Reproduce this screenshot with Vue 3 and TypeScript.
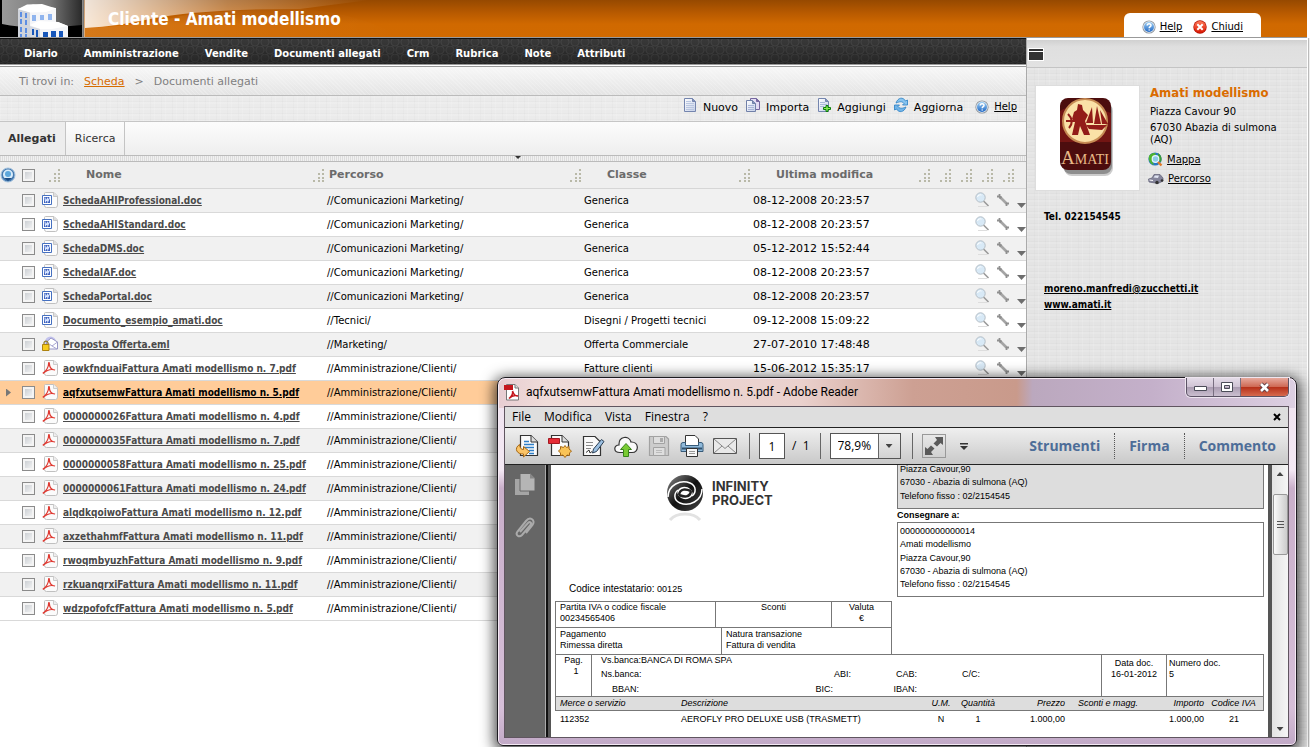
<script setup lang="ts">
import { ref } from 'vue'

type Kind = 'doc' | 'eml' | 'pdf'
interface FileRow {
  name: string
  kind: Kind
  path: string
  type: string
  date: string
}

const sections = ['Diario', 'Amministrazione', 'Vendite', 'Documenti allegati', 'Crm', 'Rubrica', 'Note', 'Attributi']

const actions = [
  { label: 'Nuovo', icon: 'i-new' },
  { label: 'Importa', icon: 'i-import' },
  { label: 'Aggiungi', icon: 'i-add' },
  { label: 'Aggiorna', icon: 'i-refresh' },
]

const row = (name: string, kind: Kind, path: string, type = '', date = ''): FileRow => ({ name, kind, path, type, date })
const marketing = '//Comunicazioni Marketing/'
const clients = '//Amministrazione/Clienti/'

const files: FileRow[] = [
  row('SchedaAHIProfessional.doc', 'doc', marketing, 'Generica', '08-12-2008 20:23:57'),
  row('SchedaAHIStandard.doc', 'doc', marketing, 'Generica', '08-12-2008 20:23:57'),
  row('SchedaDMS.doc', 'doc', marketing, 'Generica', '05-12-2012 15:52:44'),
  row('SchedaIAF.doc', 'doc', marketing, 'Generica', '08-12-2008 20:23:57'),
  row('SchedaPortal.doc', 'doc', marketing, 'Generica', '08-12-2008 20:23:57'),
  row('Documento_esempio_amati.doc', 'doc', '//Tecnici/', 'Disegni / Progetti tecnici', '09-12-2008 15:09:22'),
  row('Proposta Offerta.eml', 'eml', '//Marketing/', 'Offerta Commerciale', '27-07-2010 17:48:48'),
  row('aowkfnduaiFattura Amati modellismo n. 7.pdf', 'pdf', clients, 'Fatture clienti', '15-06-2012 15:35:17'),
  row('aqfxutsemwFattura Amati modellismo n. 5.pdf', 'pdf', clients),
  row('0000000026Fattura Amati modellismo n. 4.pdf', 'pdf', clients),
  row('0000000035Fattura Amati modellismo n. 7.pdf', 'pdf', clients),
  row('0000000058Fattura Amati modellismo n. 25.pdf', 'pdf', clients),
  row('0000000061Fattura Amati modellismo n. 24.pdf', 'pdf', clients),
  row('alqdkqoiwoFattura Amati modellismo n. 12.pdf', 'pdf', clients),
  row('axzethahmfFattura Amati modellismo n. 11.pdf', 'pdf', clients),
  row('rwoqmbyuzhFattura Amati modellismo n. 9.pdf', 'pdf', clients),
  row('rzkuanqrxiFattura Amati modellismo n. 11.pdf', 'pdf', clients),
  row('wdzpofofcfFattura Amati modellismo n. 5.pdf', 'pdf', clients),
]
const selected = ref(8)

const tools = [
  { label: 'Apri', icon: 't-open' },
  { label: 'Crea PDF', icon: 't-create' },
  { label: 'Firma documento', icon: 't-sign' },
  { label: 'Carica', icon: 't-cloud' },
  { label: 'Salva', icon: 't-save' },
  { label: 'Stampa', icon: 't-print' },
  { label: 'Invia', icon: 't-mail' },
]
const menus = ['File', 'Modifica', 'Vista', 'Finestra', '?']
const page = ref('1')
const zoom = ref('78,9%')
</script>

<template>
  <div class="app">
    <svg class="defs" width="0" height="0" aria-hidden="true">
      <defs>
        <linearGradient id="g-blue" x1="0" y1="0" x2="0" y2="1"><stop offset="0" stop-color="#9fd0f4" /><stop offset="1" stop-color="#1f67c4" /></linearGradient>
        <linearGradient id="g-red" x1="0" y1="0" x2="0" y2="1"><stop offset="0" stop-color="#ff7a5a" /><stop offset="1" stop-color="#d81500" /></linearGradient>
        <linearGradient id="g-page" x1="0" y1="0" x2="1" y2="1"><stop offset="0" stop-color="#fff" /><stop offset="1" stop-color="#c4cfe8" /></linearGradient>
        <linearGradient id="g-glass" x1="0" y1="0" x2="1" y2="0"><stop offset="0" stop-color="#999" /><stop offset=".6" stop-color="#777" /><stop offset="1" stop-color="#2a2a2a" /></linearGradient>
        <linearGradient id="g-fade" x1="0" y1="0" x2="1" y2="0"><stop offset="0" stop-color="#fff" stop-opacity=".85" /><stop offset=".5" stop-color="#fff" stop-opacity=".3" /><stop offset="1" stop-color="#fff" stop-opacity="0" /></linearGradient>
        <linearGradient id="g-ring" x1="0" y1="0" x2="1" y2="1"><stop offset="0" stop-color="#8a8a8a" /><stop offset=".5" stop-color="#111" /><stop offset="1" stop-color="#444" /></linearGradient>
      </defs>
      <symbol id="i-help" viewBox="0 0 14 14">
        <circle cx="7" cy="7" r="6.6" fill="#8e959d" /><circle cx="7" cy="7" r="5.8" fill="#e4ecf4" /><circle cx="7" cy="7" r="5" fill="url(#g-blue)" />
        <path d="M5.2 5.6C5.2 3.2 9 3.3 9 5.4 9 6.7 7.2 6.7 7.2 8.2M7.2 9.4V10.6" fill="none" stroke="#fff" stroke-width="1.5" />
      </symbol>
      <symbol id="i-close" viewBox="0 0 14 14">
        <circle cx="7" cy="7" r="6.7" fill="#b30f00" /><circle cx="7" cy="7" r="6" fill="url(#g-red)" />
        <path d="M4.3 4.3L9.7 9.7M9.7 4.3L4.3 9.7" stroke="#fff" stroke-width="2" />
      </symbol>
      <symbol id="i-new" viewBox="0 0 14 16">
        <path d="M1.5 1.5H9.5L12.5 4.5V14.5H1.5Z" fill="url(#g-page)" stroke="#7485ae" /><path d="M9.5 1.5V4.5H12.5" fill="#8494bb" stroke="#7485ae" />
        <path d="M3 4.5H8M3 6.5H11M3 8.5H11M3 10.5H11M3 12.5H11" stroke="#b9c6e0" />
      </symbol>
      <symbol id="i-import" viewBox="0 0 14 16">
        <path d="M4.5 1.5H10.5L13.5 4.5V12.5H4.5Z" fill="#e3dcf3" stroke="#75679f" /><path d="M10.5 1.5V4.5H13.5" fill="#75679f" stroke="#75679f" />
        <path d="M.5 3.5H6.5L9.5 6.5V14.5H.5Z" fill="url(#g-page)" stroke="#7080a8" /><path d="M6.5 3.5V6.5H9.5" fill="#8494bb" stroke="#7080a8" />
        <path d="M2 8.5H8M2 10.5H8M2 12.5H8" stroke="#a9b5d8" />
      </symbol>
      <symbol id="i-add" viewBox="0 0 14 16">
        <path d="M1.5 1.5H8.5L11.5 4.5V14.5H1.5Z" fill="url(#g-page)" stroke="#7485ae" /><path d="M8.5 1.5V4.5H11.5" fill="#8494bb" stroke="#7485ae" />
        <path d="M3 5.5H8M3 7.5H10M3 9.5H7" stroke="#a9b8d8" />
        <path d="M9 8.5H11V10.5H13.5V12.5H11V14.5H9V12.5H6.5V10.5H9Z" fill="#8aea54" stroke="#087d08" />
      </symbol>
      <symbol id="i-refresh" viewBox="0 0 14 16">
        <path d="M2 6C4 .5 9-.5 11.5 4L13.5 3V8H8.500L10 6.5C8 4 6 4.5 2 6Z" fill="#88c4ef" stroke="#287fc4" stroke-width=".8" />
        <path d="M12 10C10 15.5 5 16 2.5 12L.5 13V8H5.500L4 9.5C6 12 8 11.5 12 10Z" fill="#70b4e8" stroke="#287fc4" stroke-width=".8" />
      </symbol>
      <symbol id="i-round" viewBox="0 0 16 16">
        <circle cx="8" cy="8" r="7" fill="#477bb0" stroke="#a5c3df" /><circle cx="8" cy="7.5" r="5" fill="#d9ecfa" /><circle cx="8" cy="7" r="3" fill="#5da7db" /><path d="M4 11L8 14L12 11" fill="#1c4c83" />
      </symbol>
      <symbol id="i-grip" viewBox="0 0 11 13">
        <path d="M9 0h2v2H9zM9 4h2v2H9zM9 8h2v2H9zM9 11h2v2H9zM5 4h2v2H5zM5 8h2v2H5zM5 11h2v2H5zM0 11h2v2H0z" fill="#b9b9a8" />
      </symbol>
      <symbol id="f-doc" viewBox="0 0 16 16">
        <path d="M3.5.5H12L15.5 4V13Q15.5 15.5 13.5 15.5H4.5Q2.5 15.5 2.5 13.5V1.5Q2.5.5 3.5.5Z" fill="#fbfbfb" stroke="#c0c0c0" /><path d="M11.500.5V4.5H15.5" fill="#ddd" stroke="#c8c8c8" />
        <path d="M.5 3.5H9.5V12.500H.5Z" fill="#fff" stroke="#4570c0" /><path d="M2 5H8V11H2Z" fill="#3e61bd" /><path d="M3 5.500L3.500 9.500L5.500 6.500L5.800 9.500L8 5" fill="none" stroke="#d8e6ff" stroke-width="1.1" />
      </symbol>
      <symbol id="f-pdf" viewBox="0 0 16 16">
        <path d="M3.5.5H12L15.5 4V13Q15.5 15.5 13.5 15.5H4.5Q2.5 15.5 2.5 13.5V1.5Q2.5.5 3.5.5Z" fill="#fbfbfb" stroke="#c0c0c0" /><path d="M11.500.5V4.5H15.5" fill="#eee" stroke="#ccc" />
        <path d="M.7 13.2C4 11.500 6.800 7 6.600 3.500C6.300 2.300 7.600 2.300 7.400 3.800C7.500 7 9.500 9.800 13 10C10 9 5 10 1 13.500" fill="none" stroke="#df3a32" stroke-width="1.2" />
      </symbol>
      <symbol id="f-eml" viewBox="0 0 16 16">
        <circle cx="8.5" cy="6" r="5.5" fill="#c3c3ee" /><path d="M4.5 6L9 2L15.5 6V13H4.5Z" fill="#fff" stroke="#9795c5" /><path d="M4.5 6L10 10L15.5 6M10 10L15 13" fill="none" stroke="#aaa8d2" />
        <path d="M2 9V7C2 4.5 6 4.5 6 7V9" fill="none" stroke="#8f7b22" stroke-width="1.2" /><path d="M.5 8.5H7V14.500H.5Z" fill="#f6cc1c" stroke="#ad8210" />
      </symbol>
      <symbol id="a-find" viewBox="0 0 15 16">
        <path d="M3 14.5H12" stroke="#ddd" /><path d="M8.5 9L13.5 14" stroke="#999" stroke-width="1.6" /><circle cx="5.5" cy="5.5" r="4.7" fill="#d8e9f6" stroke="#b4bec6" /><path d="M2.5 5C3 3 5 2.500 6.500 3" fill="none" stroke="#fff" />
      </symbol>
      <symbol id="a-wrench" viewBox="0 0 14 14">
        <path d="M4 4L10.500 10.500" stroke="#a5a5a5" stroke-width="2.600" /><path d="M3.500 1V3.500H1M3.500 5.500L5.500 3.500M10.500 13V10.500H13" fill="none" stroke="#8f8f8f" stroke-width="1.800" />
      </symbol>
      <symbol id="s-globe" viewBox="0 0 15 15">
        <circle cx="7" cy="7" r="6.6" fill="#2677c4" /><path d="M1 4C3 1 7 0 8 2L5 5L4 9L6 13C2 12 0 8 1 4Z" fill="#4eb42e" /><path d="M10 1C14 4 14 7 13 10L10 8Z" fill="#3b9d36" />
        <circle cx="7.5" cy="7" r="3.3" fill="#8ccbe8" stroke="#e8f6ff" stroke-width="1.2" /><path d="M10 10L13.5 13.5" stroke="#e07a28" stroke-width="2.4" />
      </symbol>
      <symbol id="s-car" viewBox="0 0 16 12">
        <path d="M.5 6L4 5L6 1.5H12L15 5V8L10 10.5L1 9Z" fill="#85859b" stroke="#5e5e75" stroke-width=".7" /><path d="M5.5 4.5L7 2.5H11L10 5Z" fill="#dfe4f2" /><path d="M1.5 7L5 7.500" stroke="#fff" /><circle cx="9" cy="9.5" r="1.7" fill="#333" /><circle cx="14" cy="7.5" r="1.3" fill="#333" />
      </symbol>
      <symbol id="p-adobe" viewBox="0 0 16 17">
        <path d="M2.5.5H11L14.500 4V16H2.5Z" fill="#fff" stroke="#777" /><path d="M11 .5V4H14.500" fill="#ddd" stroke="#777" /><path d="M0 1H9V6H0Z" fill="#c4161c" />
        <path d="M5 14.500C8 12 9 9 8.500 7C10 11 11 12 14 12C11 11 8 11.500 5 14.500" fill="none" stroke="#c4161c" stroke-width="1.500" />
      </symbol>
      <symbol id="t-open" viewBox="0 0 24 24">
        <path d="M5.5 1.5H16L22.5 8V21.5H5.5Z" fill="#fafafa" stroke="#333" stroke-width="1.2" /><path d="M16 1.500V8H22.5" fill="#ddd" stroke="#333" />
        <path d="M9 7.5H14M9 10.5H19M9 13.5H19M14 16.5H19M14 19.5H19" stroke="#2f7fc8" stroke-width="1.5" />
        <path d="M4.500 10.500C5 14 6 15.500 8.500 15.500V12.500L14.500 17.500L8.500 23V20C2 20.500-1.500 14.500 4.500 10.500Z" fill="#fac468" stroke="#a66814" />
      </symbol>
      <symbol id="t-create" viewBox="0 0 24 24">
        <path d="M3.5 1.5H14L20.5 8V21.5H3.5Z" fill="#fafafa" stroke="#333" stroke-width="1.2" /><path d="M14 1.500V8H20.500" fill="#ddd" stroke="#333" /><path d="M.5 4.5H11.500V9.5H.5Z" fill="#e52b36" stroke="#a31820" />
        <path d="M17 11.500L18.500 13.500L21 12.500V15L23.500 17L21.500 19V21.500L19 21L17 23.500L15 21L12.500 21.500V19L10.500 17L12.500 15V12.500L15.500 13.500Z" fill="#f9c356" stroke="#a66814" />
      </symbol>
      <symbol id="t-sign" viewBox="0 0 24 24">
        <path d="M2.5 2.5H14L19.5 8V21.5H2.5Z" fill="#fafafa" stroke="#333" stroke-width="1.2" /><path d="M5 8.5H12M5 11.5H12M5 14.5H10" stroke="#888" /><path d="M5 18.500L8 16L9 19L11 17.500" fill="none" stroke="#333" />
        <path d="M11.500 19L12.500 15L20.5 5.500L23 7.500L15.500 17.500Z" fill="#9cc0e2" stroke="#2b3f54" />
      </symbol>
      <symbol id="t-cloud" viewBox="0 0 24 24">
        <path d="M6 18.5C-1 18.5-.5 11 5 11C4.500 2 15 1 17 8C25 7.500 25.500 18.500 18 18.500Z" fill="#fafafa" stroke="#333" stroke-width="1.2" /><path d="M12 9.5L17.500 15.5H14.5V22.5H9.5V15.5H6.500Z" fill="#7acb34" stroke="#38851a" />
      </symbol>
      <symbol id="t-save" viewBox="0 0 24 24">
        <path d="M2.500 2.500H19L21.500 5V21.500H2.500Z" fill="#ccc" stroke="#a2a2a2" stroke-width="1.200" /><path d="M6.500 2.500H17.500V9.500H6.500ZM6.500 13.500H18V21.500H6.500Z" fill="#dedede" stroke="#a2a2a2" /><path d="M13 4H16V8H13Z" fill="#aaa" /><path d="M9 16.500H15M9 18.500H15" stroke="#bbb" />
      </symbol>
      <symbol id="t-print" viewBox="0 0 24 24">
        <path d="M5.500 1.500H15L18.500 5V12H5.500Z" fill="#fff" stroke="#333" /><path d="M3 8.500H5.500V11.500H18.500V8.500H21Q23 8.500 23 10.500V17.500H1V10.500Q1 8.500 3 8.500Z" fill="#8fb9da" stroke="#365a78" /><path d="M2 14.500H22" stroke="#315370" stroke-width="2" />
        <path d="M6.500 14.500H17.500V22.500H6.500Z" fill="#f7f7f7" stroke="#333" /><path d="M9 17.500H15M9 19.500H15" stroke="#999" />
      </symbol>
      <symbol id="t-mail" viewBox="0 0 24 24">
        <path d="M.5 4.500H23.500V19.500H.5Z" fill="#e9e9e9" stroke="#555" /><path d="M1 5L12 14.500L23 5M1 19L9 12M23 19L15 12" fill="none" stroke="#888" />
      </symbol>
    </svg>

    <header class="banner">
      <svg class="art" width="500" height="37" viewBox="0 0 500 37" aria-hidden="true">
        <path d="M85 0H370Q330 5 300 9Q200 9 150 19Q120 26 85 28Z" fill="url(#g-fade)" /><path d="M85 28Q150 25 180 16Q220 10 300 9Q360 13 400 37H85Z" fill="url(#g-fade)" opacity=".12" />
        <path d="M0 0H84V37H0Z" fill="#000" /><path d="M2 0H82V25Q30 30 2 24Z" fill="url(#g-glass)" /><path d="M82.5 0V37" stroke="#888" /><path d="M84 0V37" stroke="#eee" />
        <path d="M18 9L33 4.500L56 8V25H30L28 37H18Z" fill="#f4f5f8" /><path d="M18 9L30 12V37H18Z" fill="#d0d4dc" /><path d="M18 9L27 4.500L42 4L56 8.500L46 12L30 12.500Z" fill="#fff" /><path d="M30 25L38 21L58 22L68 26V37H30Z" fill="#f4f5f8" /><path d="M30 25L38 21L58 22L68 26L52 29H40Z" fill="#fff" /><path d="M30 26L40 29V37H30Z" fill="#d5d9e1" />
        <path d="M20 12h2v5h-2zM25 13h2v5h-2zM20 19h2v5h-2zM25 20h2v5h-2zM20 27h2v5h-2zM25 28h2v5h-2zM20 34h2v3h-2zM25 34h2v3h-2z" fill="#5d8ee2" /><path d="M32 15h4v6h-4zM40 15h4v5h-4zM48 14h4v6h-4z" fill="#8fb4ee" /><path d="M32 29h2v6h-2zM36 30h2v7h-2zM43 32h5v5h-5zM51 31h5v6h-5zM59 31h4v6h-4z" fill="#1857ba" />
      </svg>
      <h1>Cliente - Amati modellismo</h1>
      <div class="corner">
        <a href="#"><svg width="14" height="14"><use href="#i-help" /></svg><u>Help</u></a>
        <a href="#"><svg width="14" height="14"><use href="#i-close" /></svg><u>Chiudi</u></a>
      </div>
    </header>

    <div class="body">
      <main>
        <nav class="sections"><a v-for="s in sections" :key="s" href="#">{{ s }}</a></nav>
        <div class="crumbs"><span>Ti trovi in:</span><a href="#">Scheda</a><span>&gt;</span><span>Documenti allegati</span></div>
        <div class="actions">
          <button v-for="a in actions" :key="a.label" type="button"><svg width="14" height="16"><use :href="'#' + a.icon" /></svg>{{ a.label }}</button>
          <a href="#"><svg width="14" height="14"><use href="#i-help" /></svg><u>Help</u></a>
        </div>
        <div class="tabs"><button type="button" class="on">Allegati</button><button type="button">Ricerca</button></div>
        <div class="splitter"><i></i></div>
        <table class="files">
          <colgroup>
            <col class="c-mark"><col class="c-check"><col class="c-icon"><col class="c-name"><col class="c-path"><col class="c-type"><col class="c-date"><col class="c-act"><col class="c-act"><col class="c-act"><col class="c-act"><col>
          </colgroup>
          <thead>
            <tr>
              <th><svg width="16" height="16"><use href="#i-round" /></svg></th>
              <th><input type="checkbox" aria-label="Seleziona tutto"></th>
              <th><svg class="grip" width="11" height="13"><use href="#i-grip" /></svg></th>
              <th><div class="head">Nome<svg class="grip" width="11" height="13"><use href="#i-grip" /></svg></div></th>
              <th><div class="head near">Percorso<svg class="grip" width="11" height="13"><use href="#i-grip" /></svg></div></th>
              <th><div class="head">Classe<svg class="grip" width="11" height="13"><use href="#i-grip" /></svg></div></th>
              <th><div class="head">Ultima modifica<svg class="grip" width="11" height="13"><use href="#i-grip" /></svg></div></th>
              <th v-for="n in 4" :key="n"><svg class="grip" width="11" height="13"><use href="#i-grip" /></svg></th>
              <th></th>
            </tr>
          </thead>
          <tbody>
            <tr v-for="(f, i) in files" :key="f.name" :class="{ sel: i === selected }" @click="selected = i">
              <td><i v-if="i === selected" class="marker"></i></td>
              <td><input type="checkbox" :aria-label="f.name"></td>
              <td><svg class="kind" width="16" height="16"><use :href="'#f-' + f.kind" /></svg></td>
              <td><a href="#">{{ f.name }}</a></td>
              <td>{{ f.path }}</td>
              <td>{{ f.type }}</td>
              <td class="date">{{ f.date }}</td>
              <td></td>
              <td></td>
              <td><button type="button" aria-label="Anteprima"><svg width="15" height="16"><use href="#a-find" /></svg></button></td>
              <td><button type="button" aria-label="Strumenti"><svg width="14" height="14"><use href="#a-wrench" /></svg></button></td>
              <td class="more"><button type="button" aria-label="Altro"><i></i></button></td>
            </tr>
          </tbody>
        </table>
      </main>

      <aside>
        <div class="bar"><button type="button" aria-label="Riduci"></button></div>
        <div class="card">
          <div class="brand">
            <svg width="60" height="82" viewBox="0 0 60 82" role="img" aria-label="Amati">
              <rect x="6" y="6" width="49" height="73" rx="8" fill="#000" opacity=".2" /><rect x="5" y="5" width="49" height="72" rx="8" fill="#000" opacity=".3" /><rect x="2" y="1" width="51" height="72" rx="8" fill="#4c0d0e" /><path d="M2 14Q20 3 53 16V45H2Z" fill="#8c1b17" opacity=".6" />
              <circle cx="27" cy="24" r="22" fill="#fae1a7" stroke="#c68b54" stroke-width="2" />
              <path d="M20 7L24 8L25 13L30 18L27 24L32 38H26L22 29L20 38H14L17 25L14 22L16 15L19 13Z" fill="#921c18" /><path d="M10 17Q17 24 11 31M8 24H17" fill="none" stroke="#921c18" stroke-width="2" /><path d="M34 10L28 26H35ZM39 9L36 27H43ZM42 13L44 27H50ZM28 28L49 28L44 33L31 32Z" fill="#921c18" />
              <text x="3" y="67" class="brand-name" font-size="19">A<tspan font-size="14">MATI</tspan></text>
            </svg>
          </div>
          <div class="where">
            <h2>Amati modellismo</h2>
            <p>Piazza Cavour 90</p>
            <p>67030 Abazia di sulmona (AQ)</p>
            <a href="#"><svg width="15" height="15"><use href="#s-globe" /></svg><u>Mappa</u></a>
            <a href="#"><svg width="16" height="12"><use href="#s-car" /></svg><u>Percorso</u></a>
          </div>
        </div>
        <p class="tel">Tel. 022154545</p>
        <div class="links"><a href="#">moreno.manfredi@zucchetti.it</a><a href="#">www.amati.it</a></div>
      </aside>
      <div class="edge"></div>
    </div>

    <section class="reader" aria-label="Adobe Reader">
      <div class="title">
        <svg width="16" height="17"><use href="#p-adobe" /></svg>
        <span>aqfxutsemwFattura Amati modellismo n. 5.pdf - Adobe Reader</span>
        <div class="buttons">
          <button type="button" aria-label="Riduci a icona"><svg width="13" height="10" viewBox="0 0 13 10"><path d="M.5 4.500H12.500V8.500H.5Z" fill="#fff" stroke="#4b4c58" /></svg></button>
          <button type="button" aria-label="Ingrandisci"><svg width="12" height="10" viewBox="0 0 12 10"><path d="M.5.5H11.500V9.500H.5ZM3.500 3.500H8.500V6.500H3.500Z" fill="#fff" stroke="#4b4c58" fill-rule="evenodd" /></svg></button>
          <button type="button" class="shut" aria-label="Chiudi"><svg width="13" height="11" viewBox="0 0 13 11"><path d="M3 2L10 9M10 2L3 9" stroke="#5b3b42" stroke-width="4.500" /><path d="M3 2L10 9M10 2L3 9" stroke="#fff" stroke-width="2.600" /></svg></button>
        </div>
      </div>
      <div class="frame">
        <div class="menu">
          <button v-for="m in menus" :key="m" type="button">{{ m }}</button>
          <button type="button" class="x" aria-label="Chiudi documento"><svg width="8" height="8" viewBox="0 0 8 8"><path d="M1 1L7 7M7 1L1 7" stroke="#000" stroke-width="2" /></svg></button>
        </div>
        <div class="tools">
          <button v-for="t in tools" :key="t.icon" type="button" :aria-label="t.label"><svg width="24" height="24"><use :href="'#' + t.icon" /></svg></button>
          <i class="rule"></i>
          <input v-model="page" class="page-no" aria-label="Pagina"><span class="of">/&nbsp; 1</span>
          <i class="rule"></i>
          <span class="zoom"><select v-model="zoom" aria-label="Zoom"><option>78,9%</option></select><b></b></span>
          <i class="rule"></i>
          <button type="button" class="expand" aria-label="Modalità lettura"><svg width="18" height="18" viewBox="0 0 18 18"><path d="M10 0H18V8L15.500 6L12 9.500L8.500 6.500L12 3ZM0 18V10L2.500 12L6 8.500L9.500 11.500L6 15L8 18Z" fill="#5a5a5a" /></svg></button>
          <button type="button" class="drop" aria-label="Altri strumenti"><svg width="8" height="7" viewBox="0 0 8 7"><path d="M0 0H8V1.500H0ZM0 3H8L4 7Z" fill="#333" /></svg></button>
          <div class="panes"><button type="button">Strumenti</button><button type="button">Firma</button><button type="button">Commento</button></div>
        </div>
        <div class="view">
          <div class="side">
            <svg width="22" height="24" viewBox="0 0 22 24"><path d="M1 6H15V22H1Z" fill="#a5a5a5" /><path d="M6 .5H16L21 5.500V18H6Z" fill="#b5b5b5" stroke="#666" /><path d="M16 .5V5.500H21" fill="#888" /></svg>
            <svg width="22" height="24" viewBox="0 0 22 24"><path d="M6 16L14 7C16 5 18 7 16.500 9L8 19C5 22 1 19 3.500 15.500L12 5C16 0 22 4 18.500 9L12 17" fill="none" stroke="#aaa" stroke-width="2" /></svg>
          </div>
          <article class="sheet">
            <div class="upper">
              <div class="left">
                <div class="project">
                  <svg width="40" height="48" viewBox="0 0 40 48" aria-hidden="true">
                    <circle cx="20" cy="19" r="18" fill="url(#g-ring)" />
                    <path d="M3 23C3 11 16 5 25 9C32 12 31 19 27 22" fill="none" stroke="#fff" stroke-width="1.500" /><path d="M37 15C37 27 24 33 15 29C8 26 9 19 13 16" fill="none" stroke="#fff" stroke-width="1.500" />
                    <path d="M13 16C16 12 22 12 25 15C28 18 28 20 27 22C24 26 18 26 15 23C12 20 12 18 13 16Z" fill="#fff" /><path d="M14 21C15 14 21 15 26 17M26 17C25 24 19 23 14 21" fill="none" stroke="#222" stroke-width="2.500" />
                    <path d="M5 46Q10 40 20 40T35 46" fill="none" stroke="#e2e2e2" stroke-width="3" />
                  </svg>
                  <strong>INFINITY<br>PROJECT</strong>
                </div>
                <p class="code"><span>Codice intestatario:</span> 00125</p>
                <div class="grid three"><div>Partita IVA o codice fiscale<br>00234565406</div><div class="mid">Sconti</div><div class="mid">Valuta<br>€</div></div>
                <div class="grid two"><div>Pagamento<br>Rimessa diretta</div><div>Natura transazione<br>Fattura di vendita</div></div>
              </div>
              <div class="right">
                <div class="addr gray"><p>Piazza Cavour,90</p><p>67030 - Abazia di sulmona (AQ)</p><p>Telefono fisso : 02/2154545</p></div>
                <h3>Consegnare a:</h3>
                <div class="addr"><p>000000000000014</p><p>Amati modellismo</p><p>Piazza Cavour,90</p><p>67030 - Abazia di sulmona (AQ)</p><p>Telefono fisso : 02/2154545</p></div>
              </div>
            </div>
            <div class="bank">
              <div class="mid">Pag.<br>&nbsp; 1</div>
              <div class="lines">
                <p><span>Vs.banca:</span><span>BANCA DI ROMA SPA</span></p>
                <p class="b2"><span>Ns.banca:</span><span>ABI:</span><span>CAB:</span><span>C/C:</span></p>
                <p class="b3"><span>BBAN:</span><span>BIC:</span><span>IBAN:</span></p>
              </div>
              <div class="mid pad">Data doc.<br>16-01-2012</div>
              <div class="pad">Numero doc.<br>5</div>
            </div>
            <table class="goods">
              <colgroup><col class="g1"><col><col class="g3"><col class="g4"><col class="g5"><col class="g6"><col class="g7"><col class="g8"></colgroup>
              <thead><tr><th>Merce o servizio</th><th>Descrizione</th><th class="mid">U.M.</th><th class="mid">Quantità</th><th class="end">Prezzo</th><th class="disc">Sconti e magg.</th><th class="end">Importo</th><th class="mid">Codice IVA</th></tr></thead>
              <tbody><tr><td>112352</td><td>AEROFLY PRO DELUXE USB (TRASMETT)</td><td class="mid">N</td><td class="mid">1</td><td class="end">1.000,00</td><td></td><td class="end">1.000,00</td><td class="mid">21</td></tr></tbody>
            </table>
          </article>
          <div class="scroll"><i class="up"></i><div class="thumb"><i></i></div><i class="down"></i></div>
        </div>
      </div>
    </section>
  </div>
</template>

<style>
body { margin: 0; overflow: hidden; }
</style>

<style scoped>
.app { position: relative; display: flex; flex-direction: column; height: 100vh; overflow: hidden; background: #fff; color: #000; font: 10px/12px "DejaVu Sans", Verdana, sans-serif; }
.app * { box-sizing: border-box; }
.defs { position: absolute; }
svg { display: block; flex: none; }
p, h1, h2, h3 { margin: 0; }
a { color: inherit; }
button { padding: 0; border: 0; background: none; color: inherit; font: inherit; display: flex; align-items: center; justify-content: center; }

.banner { position: relative; display: flex; align-items: flex-end; flex: none; height: 38px; margin-right: 3px; background: linear-gradient(#964900, #b85a00 35%, #d06900 65%, #d16a00); border-bottom: 1px solid #999; }
.art { position: absolute; left: 0; top: 0; }
.banner h1 { position: relative; flex: 1; align-self: center; margin-left: 108px; color: #fff; font: bold 17px/20px "DejaVu Sans Condensed", "DejaVu Sans", Tahoma, sans-serif; }
.corner { display: flex; align-items: center; gap: 11px; height: 24px; margin-right: 46px; padding: 3px 18px 0; border-radius: 6px 6px 0 0; background: #fff; }
.corner a { display: flex; align-items: center; gap: 4px; text-decoration: none; }

.body { display: grid; grid-template-columns: minmax(0, 1fr) 281px 3px; flex: 1; min-height: 0; }
main { min-width: 0; background: #fff; }
.sections { display: flex; align-items: center; gap: 26px; height: 29px; padding: 4px 24px 0; color: #fff; font-weight: bold; border-bottom: 1px solid #999; box-shadow: inset 0 -1px #fff, inset 0 -2px #999, inset 0 1px #111;
  background: linear-gradient(#ffffff0c, #00000040), radial-gradient(circle at 5px 4px, #303030 3px, #404040 4px, transparent 5px) 0 0 / 10px 16px, radial-gradient(circle at 5px 4px, #303030 3px, #404040 4px, transparent 5px) 5px 8px / 10px 16px, #2b2b2b; }
.sections a { text-decoration: none; }
.crumbs { display: flex; align-items: center; gap: 10px; height: 29px; padding: 1px 0 0 19px; border-bottom: 1px solid #bbb; background: repeating-linear-gradient(45deg, #ffffff30 0 1px, transparent 1px 3px), linear-gradient(#f7f7f7, #e4e4e4); color: #808080; font-size: 11px; }
.crumbs a { color: #d66b00; }
.actions, aside { background: repeating-linear-gradient(90deg, #ffffff20 0 1px, transparent 1px 7px, #00000004 7px 8px, transparent 8px 11px), repeating-linear-gradient(#ffffff20 0 2px, transparent 2px 5px, #00000004 5px 6px), #ebebeb; }
aside { background-color: #e4e4e4; }
.actions { display: flex; align-items: flex-start; justify-content: flex-end; gap: 8px; height: 26px; padding: 1px 9px 0 0; border-bottom: 1px solid #c6c6c6; font-size: 11px; }
.actions button { gap: 6px; align-items: flex-start; line-height: 22px; }
.actions a { display: flex; align-items: center; gap: 5px; margin-left: 4px; height: 20px; font-size: 10px; text-decoration: none; }
.tabs { display: flex; height: 34px; border-bottom: 1px solid #bbb; background: linear-gradient(#fcfcfc, #eee); font-size: 11px; color: #333; }
.tabs button { padding: 0 9px; border-right: 1px solid #c4c4c4; }
.tabs .on { padding-left: 8px; background: #ededed; font-weight: bold; }
.splitter { display: flex; justify-content: center; height: 6px; padding-left: 10px; border-bottom: 1px solid #bbb; background: repeating-linear-gradient(90deg, #ddd 0 1px, #f1f1f1 1px 2px); }
.splitter i { width: 6px; height: 3px; background: #333; clip-path: polygon(0 0, 100% 0, 50% 100%); }

.files { width: 100%; table-layout: fixed; border-collapse: separate; border-spacing: 0; }
.c-mark, .c-check, .c-icon { width: 20px; }
.c-name { width: 264px; }
.c-path { width: 257px; }
.c-type { width: 169px; }
.c-date { width: 180px; }
.c-act { width: 21px; }
.files th { height: 27px; padding: 0; border-bottom: 1px solid #d6d6d6; background: #efefef; color: #6b6b6b; font-size: 11px; text-align: left; }
.files th .grip { margin-left: auto; }
.head { display: flex; align-items: center; padding-left: 26px; }
.head.near { padding-left: 5px; }
.files td { height: 24px; padding: 0 3px; border-bottom: 1px solid #d9d9d9; white-space: nowrap; }
.files td:nth-child(1), .files td:nth-child(2), .files td:nth-child(3), .files th:nth-child(2) { padding: 0 0 0 2px; }
.files td:nth-child(n+8) { padding: 0 0 2px 3px; }
.kind { margin-bottom: 2px; }
.files tr:nth-child(odd) td { background: #f1f1f1; }
.files tr.sel td { background: #ffcc99; }
.files td a { color: #4a4a4a; font: bold 10px/12px "DejaVu Sans Condensed", "DejaVu Sans", Tahoma, sans-serif; }
.files .sel a { color: #000; }
.files .date { font-size: 11px; }
.files input { appearance: none; display: block; width: 13px; height: 13px; margin: 0; border: 1px solid #8b8b8b; background: linear-gradient(135deg, #c3c7cc, #fafafa) padding-box; box-shadow: inset 0 0 0 2px #f4f4f4; }
.marker { display: block; width: 5px; height: 8px; margin-left: 4px; background: #777; clip-path: polygon(0 0, 100% 50%, 0 100%); }
.files td.more { vertical-align: bottom; }
.more i { width: 9px; height: 5px; margin-bottom: 2px; background: #6d6d6d; clip-path: polygon(0 0, 100% 0, 50% 100%); }

aside { border-left: 1px solid #aaa; }
.bar { height: 30px; padding: 10px 1px 0; border-bottom: 1px solid #c4c4c4; background: linear-gradient(#ccc, #dfdfdf 30%, #e2e2e2); box-shadow: inset 0 2px #fff; }
.bar button { width: 16px; height: 13px; border: 1px solid #fff; background: linear-gradient(#333 2px, #fff 2px 3px, #333 3px); }
.card { display: flex; align-items: flex-start; gap: 10px; padding: 17px 8px 0; }
.brand { display: flex; align-items: center; justify-content: center; flex: none; width: 105px; height: 106px; border: 1px solid #ddd; background: #fff; }
.brand-name { fill: #e8b988; font-family: "Liberation Serif", serif; }
.where { padding-top: 1px; }
.where h2 { margin-bottom: 7px; color: #da6c00; font: bold 13px/13px "DejaVu Sans Condensed", "DejaVu Sans", Tahoma, sans-serif; }
.where p { margin-bottom: 4px; }
.where a { display: flex; align-items: center; gap: 4px; width: fit-content; height: 19px; margin-left: -2px; text-decoration: none; }
.tel, .links { margin: 20px 0 0 17px; font: bold 10px/12px "DejaVu Sans Condensed", "DejaVu Sans", Tahoma, sans-serif; }
.links { display: grid; gap: 4px; margin-top: 60px; justify-items: start; }
.edge { border-left: 1px solid #fff; background: #eee; box-shadow: inset 1px 0 #bbb; }

.reader { position: absolute; left: 497px; top: 377px; right: 13px; padding: 0 7px 7px 6px; border: 1px solid #1d1b20; border-radius: 8px 8px 6px 6px; font: 12px/16px "Open Sans", "Segoe UI", sans-serif;
  background: linear-gradient(90deg, #e7cdd2, #f0dcd9 6%, #ead1cd 38%, #cda093 52%, #c99a8b 65%, #bba8be 67%, #c4b0ca 82%, #ddd0e2) 0 0 / 100% 30px no-repeat, linear-gradient(#efe2ef, #f4e9f4 25%, #c9afca 30%, #d6bfd8 90%, #c1a9c6);
  box-shadow: inset 0 0 0 1px #f5eaf4, 0 3px 14px 3px rgb(0 0 0 / 70%); }
.title { display: flex; align-items: center; gap: 6px; height: 28px; font-family: Roboto, "Segoe UI", sans-serif; }
.buttons { display: flex; align-self: flex-start; margin-left: auto; height: 19px; border: 1px solid #5c5365; border-top: 0; border-radius: 0 0 5px 5px; overflow: hidden; background: linear-gradient(#e4dce8, #cfc3d4 48%, #a99bb0 50%, #cbbfd0); box-shadow: 0 0 0 1px #eee6f0; }
.buttons button { width: 27px; border-right: 1px solid #786e80; }
.buttons .shut { width: 47px; border: 0; background: linear-gradient(#e6a99d, #cf6a55 48%, #b52f18 50%, #d76a4e); }
.frame { border: 1px solid #605560; background: #ddd; }
.menu { display: flex; align-items: center; gap: 13px; height: 20px; padding: 0 7px; background: #dedede; }
.menu .x { margin-left: auto; }
.tools { display: flex; align-items: center; height: 38px; padding: 0 12px 0 10px; border: 1px solid #222; border-width: 1px 0; background: linear-gradient(#efefef, #c9c9c9); }
.tools > button { margin-right: 9px; }
.rule { width: 1px; height: 26px; margin: 0 9px 0 3px; background: #666; }
.page-no { width: 26px; height: 26px; padding: 0; border: 1px solid #555; background: #fff; font: inherit; text-align: center; }
.of { margin: 0 7px; }
.zoom { display: flex; width: 71px; height: 26px; margin-right: 8px; border: 1px solid #555; background: #fff; }
.zoom select { appearance: none; flex: 1; min-width: 0; padding: 0 0 0 7px; border: 0; background: none; color: #000; font: inherit; }
.zoom b { display: flex; align-items: center; justify-content: center; width: 22px; border-left: 1px solid #666; background: linear-gradient(#eee, #d2d2d2); }
.zoom b::after { content: ""; width: 7px; height: 4px; background: #444; clip-path: polygon(0 0, 100% 0, 50% 100%); }
.tools .expand { width: 24px; height: 24px; margin-right: 14px; border: 1px solid #999; }
.tools .drop { margin: 0; }
.panes { display: flex; margin-left: auto; color: #4d6d98; font: bold 14px/26px "Open Sans", "Segoe UI", sans-serif; }
.panes button { height: 26px; padding: 0 14px; border-right: 1px dotted #555; }
.panes button:last-child { padding-right: 0; border: 0; }
.view { display: flex; height: 272px; background: #555; }
.side { display: flex; flex-direction: column; align-items: center; gap: 19px; width: 41px; padding-top: 8px; border-right: 1px solid #aaa; background: #666; box-shadow: 2px 0 #111; }
.sheet { flex: 1; min-width: 0; margin: 0 4px 0 5px; padding: 0 4px; background: #fff; font: 9px/11px "Liberation Sans", Arial, sans-serif; }
.upper { display: flex; gap: 5px; height: 189px; }
.left { display: flex; flex-direction: column; width: 337px; flex: none; }
.right { flex: 1; }
.project { display: flex; gap: 7px; margin: 9px 0 0 110px; }
.project strong { padding-top: 5px; color: #333; font: bold 13px/14px Inter, "DejaVu Sans", sans-serif; }
.code { margin: auto 0 6px 14px; }
.code span { font-size: 10px; }
.grid { display: grid; height: 26px; border: 1px solid #777; border-bottom: 0; }
.grid > div { padding: 0 4px; border-right: 1px solid #777; }
.grid > div:last-child { border: 0; }
.three { grid-template-columns: 160px 116px 1fr; }
.two { grid-template-columns: 166px 1fr; height: 27px; }
.two > div { padding-top: 1px; }
.mid { text-align: center; }
.addr { height: 75px; padding: 2px 0 0 2px; border: 1px solid #777; }
.addr p { height: 13px; line-height: 13px; }
.addr p + p + p { margin-top: 1px; }
.addr p + p + p + p { margin-top: 0; }
.addr.gray { display: flex; flex-direction: column; justify-content: flex-end; height: 44px; padding-bottom: 5px; border-top: 0; background: #ddd; }
.right h3 { font: bold 9px/13px "Liberation Sans", Arial, sans-serif; }
.bank { display: grid; grid-template-columns: 36px 1fr 65px 96px; height: 42px; border: 1px solid #777; border-bottom: 0; }
.bank > div { border-right: 1px solid #777; }
.bank > div:last-child { border: 0; padding-left: 2px; }
.bank .pad { padding-top: 3px; }
.lines { padding-left: 9px; }
.lines p { display: flex; height: 13px; line-height: 11px; }
.lines .b2, .lines .b3 { display: grid; grid-template-columns: 38px 212px 66px 80px; line-height: 13px; text-align: right; }
.lines .b3 { grid-template-columns: 38px 194px 84px; line-height: 16px; }
.b2 span:last-child { padding-left: 45px; text-align: left; }
.goods { width: 100%; table-layout: fixed; border-collapse: separate; border-spacing: 0; }
.goods th { height: 15px; padding: 0; border: solid #777; border-width: 1px 0; background: #ddd; font-weight: normal; font-style: italic; text-align: left; white-space: nowrap; }
.goods th:first-child { border-left-width: 1px; padding-left: 4px; }
.goods th:last-child { border-right-width: 1px; }
.goods td { padding: 3px 0; }
.goods td:first-child { padding-left: 5px; }
.g1 { width: 126px; }
.g3 { width: 36px; }
.g4 { width: 38px; }
.g5 { width: 68px; }
.g6 { width: 79px; }
.g7 { width: 60px; }
.g8 { width: 60px; }
.goods .mid { text-align: center; }
.goods .end { text-align: right; }
.goods .disc { padding-left: 13px; }
.scroll { display: flex; flex-direction: column; align-items: center; width: 16px; background: linear-gradient(90deg, #e3e3e3, #f5f5f5); }
.scroll .up, .scroll .down { width: 7px; height: 4px; background: #444; }
.up { margin: 7px 0 18px; clip-path: polygon(50% 0, 100% 100%, 0 100%); }
.down { margin: auto 0 6px; clip-path: polygon(0 0, 100% 0, 50% 100%); }
.thumb { display: flex; align-items: center; justify-content: center; width: 15px; height: 61px; border: 1px solid #999; border-radius: 2px; background: linear-gradient(90deg, #fafafa, #ccc); }
.thumb i { width: 7px; height: 8px; background: repeating-linear-gradient(#555 0 1px, transparent 1px 3px); }
</style>
